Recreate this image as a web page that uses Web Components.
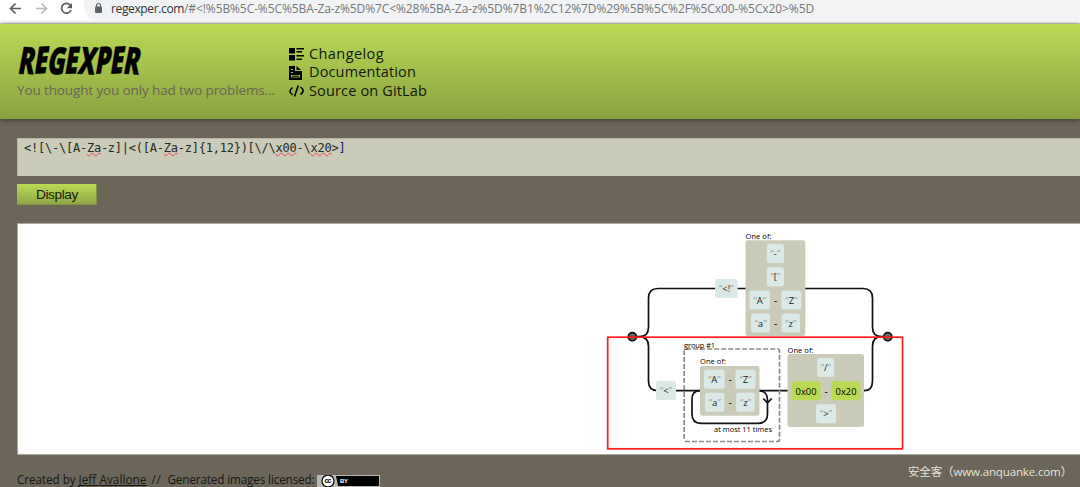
<!DOCTYPE html>
<html lang="en"><head><meta charset="utf-8"><title>Regexper</title>
<style>html,body{margin:0;height:100%;overflow:hidden;background:#6b6659}</style></head><body>
<regexper-page></regexper-page>
<script>
const define=(name,html,setup)=>customElements.define(name,class extends HTMLElement{
  connectedCallback(){ if(this.shadowRoot)return; const r=this.attachShadow({mode:'open'}); r.innerHTML=html; if(setup)setup(this,r); }
});
// Text whose tracking is adjusted to a given line width.
define('fit-text','<style>:host{display:inline-block;white-space:nowrap}:host([link]) span{text-decoration:underline;text-underline-offset:1px;text-decoration-thickness:1px;text-decoration-skip-ink:none}</style><span><slot></slot></span>',(el,r)=>{
  const w=+el.getAttribute('w'), n=el.textContent.length, s=r.querySelector('span');
  s.style.letterSpacing=((w-s.getBoundingClientRect().width)/n)+'px';
});
define('browser-bar',`<style>
:host{display:flex;background:#fff;border-bottom:1px solid #d5d9cf;box-sizing:border-box;height:24px;font:12px "Open Sans",sans-serif}
.nav{width:84px;flex:none}.box{flex:1;height:20px;background:#f1f3f4;border-radius:0 0 0 12px;display:flex;color:#75787b;line-height:17px}
.lock{width:27px;flex:none}b{font-weight:400;color:#303236}
</style><svg class="nav" width="84" height="20" fill="none" stroke="#5a5d61" stroke-width="1.7"><path d="M21 8.500H11M15.500 3.500l-5 5 5 5"/><path stroke="#b8babd" d="M36 8.500h10M41.500 3.500l5 5-5 5"/><path d="M70.500 5.500A4.900 4.900 0 1 0 71 10"/><path fill="#5a5d61" stroke="none" d="M72 3v5.200h-5.200z"/></svg>
<div class="box"><svg class="lock" width="27" height="18"><rect x="11" y="6.500" width="7" height="6.500" rx="1" fill="#5f6368"/><path d="M12.500 7V5.500a2 2 0 0 1 4 0V7" fill="none" stroke="#5f6368" stroke-width="1.200"/></svg><fit-text w="73"><b>regexper.com</b></fit-text><fit-text w="630">/#&lt;!%5B%5C-%5C%5BA-Za-z%5D%7C&lt;%28%5BA-Za-z%5D%7B1%2C12%7D%29%5B%5C%2F%5Cx00-%5Cx20&gt;%5D</fit-text></div>`);
define('brand-logo',`<style>:host{display:block;width:272px}svg{display:block;overflow:visible;margin:-10px 0 -10px -6px}div{font-size:13.500px;line-height:16px;padding-top:1px;color:#6b6659}</style>
<svg width="150" height="56" viewBox="-6 -10 150 56"><text transform="translate(0 28.800) skewX(-10)" x="0" y="0" font-family="Open Sans,sans-serif" font-weight="800" font-size="37.500" textLength="121.500" lengthAdjust="spacingAndGlyphs" rotate="1 -2 2 -1 2 -1 -2 2" stroke="#000" stroke-width=".5">REGEXPER</text></svg><div><fit-text w="258">You thought you only had two problems…</fit-text></div>`);
define('nav-link',`<style>:host{display:flex;height:18.300px;align-items:center;font-size:14.500px;line-height:18px;color:#11180a}svg{width:15px;height:15px;margin-right:5px;flex:none}</style><svg viewBox="0 0 15 15"></svg><slot></slot>`,(el,r)=>{
 r.querySelector('svg').innerHTML={
 list:'<path d="M0 1h6v5.500H0zM0 8h6v5.500H0zM7.500 1H15v1.500H7.500zM7.500 4H13v1.500H7.500zM7.500 8H15v1.500H7.500zM7.500 11.500H13V13H7.500z"/>',
 doc:'<path fill-rule="evenodd" d="M0 1h6v5h7v9H0zM2 4h2v1H2zM2 7h2v1H2zM2 10v2.500h9V10zM3 10.700h7v1H3zM7.500 1 12 5H7.500z"/>',
 code:'<path fill="none" stroke="#000" stroke-width="1.600" d="M3.500 4.500Q1 6.500 1 8.200T3.500 12M11.500 4q2.700 2.200 2.700 3.800t-2.700 3.700M9.300 2.500 5.500 13.500"/>'}[el.getAttribute('icon')];
});
define('page-header',`<style>:host{display:flex;box-sizing:border-box;height:95px;padding:21px 0 0 17px;background:linear-gradient(#bada55,#89a240);box-shadow:0 1px 5px #38362f;font-family:"Open Sans",sans-serif}</style>
<brand-logo></brand-logo><nav><nav-link icon="list"><fit-text w="75">Changelog</fit-text></nav-link><nav-link icon="doc"><fit-text w="107">Documentation</fit-text></nav-link><nav-link icon="code"><fit-text w="118">Source on GitLab</fit-text></nav-link></nav>`);
define('regex-form',`<style>:host{display:block;padding:19px 0 0 17px}.in{height:38px;box-sizing:border-box;padding:2px 7px;background:#cbcbba;box-shadow:inset 1px 1px #b7b7a6;font:12px/17px "DejaVu Sans Mono",monospace;color:#252a20}
u{text-decoration:underline wavy #ed4545 .7px;text-underline-offset:0;text-decoration-skip-ink:none}i{font-style:normal;color:#101b70}
button{display:block;margin:8px 0 0;width:80px;height:21px;padding:0 0 0 1px;border:0;border-right:1px solid #809448;border-bottom:1px solid #809448;background:linear-gradient(#bada55,#8fa747);font:13.700px/19px "Liberation Sans",sans-serif;color:#172007}</style>
<div class="in"><fit-text w="321.500">&lt;![\\-\\[A-<u>Za</u>-z]|&lt;([A-<u>Za</u>-z]{1,12})[\\/\\<u>x00</u>-\\<u>x20</u>&gt;<i>]</i></fit-text></div><button><fit-text w="42">Display</fit-text></button>`);
define('rail-diagram','<style>:host{display:block;height:230px}svg{display:block;font-family:"Open Sans",sans-serif}</style><svg width="320" height="230" viewBox="600 224 320 230"></svg>',(el,r)=>{
 const esc=t=>t.replace('<','&lt;').replace('>','&gt;');
 const fit=(x,y,w,t)=>`<text x="${x}" y="${y}" font-size="7.500" textLength="${w}">${t}</text>`;
 const group=(x,y,w,h)=>`<rect x="${x}" y="${y}" width="${w}" height="${h}" rx="2.500" fill="#cbcbba"/>`;
 const lit=(x,y,w,t)=>`<rect x="${x}" y="${y}" width="${w}" height="19" rx="2.500" fill="#dae9e5"/><text x="${x+w/2}" y="${y+13}" text-anchor="middle" font-size="9.500" fill="#222"><tspan fill="#999">“</tspan>${esc(t)}<tspan fill="#999">”</tspan></text>`;
 const hex=(x,y,t)=>`<rect x="${x}" y="${y}" width="29" height="19" rx="2.500" fill="#bada55"/><text x="${x+4}" y="${y+13.5}" font-size="9.300" textLength="21">${t}</text>`;
 const dash=(x,y)=>`<text x="${x}" y="${y}" text-anchor="middle" font-size="10">-</text>`;
 r.querySelector('svg').innerHTML=`
<g fill="none" stroke="#111" stroke-width="1.700">
<path d="M632 336.700h7q9.500 0 9.500-9.500V298q0-9.500 9.500-9.500H863q9.500 0 9.500 9.500v29.200q0 9.500 9.500 9.500h6M639 336.700q9.500 0 9.500 9.500V381q0 9.700 9.500 9.700H864q8.500 0 8.500-9.700v-34.800q0-9.500 9.500-9.500"/>
<path d="M700 390.700q-8 0-8 8.500V414q0 9.300 9 9.300h57q9.500 0 9.500-9.300v-14q0-9.300-9-9.300M763.300 398.500l4.200 4.500 4.200-4.500"/>
<rect x="684.200" y="349" width="95.300" height="92.500" rx="2" stroke="#908c83" stroke-dasharray="5 2"/></g>
<g fill="#6b6659" stroke="#111" stroke-width="1.600"><circle cx="632.300" cy="336.700" r="4.100"/><circle cx="887.800" cy="336.700" r="4.100"/></g>
${group(745.5,240.3,59.8,95.7)}${group(700,366,59.5,49.7)}${group(787.5,354,76.5,73)}
${fit(745.5,239,26,'One of:')}${fit(684,347.5,31,'group #1')}${fit(700,364,26,'One of:')}${fit(787.5,353,26,'One of:')}${fit(714,432,58,'at most 11 times')}
${lit(715,279,22.7,'<!')}${lit(766.8,244,17.2,'-')}${lit(766.8,267.3,17.2,'[')}
${lit(749.5,290.5,20.5,'A')}${lit(781.2,290.5,20.3,'Z')}${lit(751,313.5,19,'a')}${lit(781.5,313.5,18.5,'z')}${dash(775.7,303.5)}${dash(775.7,327)}
${lit(656,381,20,'<')}${lit(704,369.700,20.700,'A')}${lit(735.500,369.700,20,'Z')}${lit(705,392.700,19.500,'a')}${lit(736.200,392.700,18.500,'z')}${dash(730.200,383)}${dash(730.200,406)}
${lit(817.200,358,17,'/')}${hex(791.500,381.300,'0x00')}${hex(831.500,381.300,'0x20')}${dash(826,395)}${lit(816,404.200,20,'>')}
<rect x="607.700" y="337.200" width="294.800" height="111.600" fill="none" stroke="#ff1a1a" stroke-width="1.700"/>`;
});
define('result-panel',`<style>:host{display:block;box-sizing:border-box;height:232px;margin:18px 0 0 17px;background:#fff;border:1px solid #aaa79f;border-right:0;padding-left:582px}</style><rail-diagram></rail-diagram>`);
define('page-footer',`<style>:host{display:flex;height:32px;padding:0 8px 0 17px;font:11.700px/16px "Open Sans",sans-serif;color:#171713}.l{display:flex;padding-top:16px;flex:1}.g{width:5px}.cc{margin:4px 0 0 2px}.w{padding-top:9px;color:#e5e3dd;font-family:"Open Sans","Noto Sans CJK SC",sans-serif;font-size:11.500px}</style>
<div class="l"><fit-text w="61.500">Created by&nbsp;</fit-text><fit-text link w="68">Jeff Avallone</fit-text><span class="g"></span><fit-text w="10">//</fit-text><span style="width:6px"></span><fit-text w="147">Generated images licensed:</fit-text>
<svg class="cc" width="63" height="12" viewBox="0 0 63 12"><rect width="63" height="12" fill="#000"/><rect x=".5" y=".5" width="62" height="11" fill="none" stroke="#b6b8b1"/><path d="M1 1h18l2 10H1z" fill="#b6b8b1"/><circle cx="11" cy="6" r="6" fill="#fff" stroke="#111" stroke-width="1.300"/><text x="11" y="8.300" text-anchor="middle" font-family="Liberation Sans" font-weight="700" font-size="7" textLength="7">cc</text><text x="23" y="8" fill="#fff" font-family="Liberation Sans" font-weight="700" font-size="6" textLength="8">BY</text></svg></div>
<div class="w"><fit-text w="164">安全客（www.anquanke.com）</fit-text></div>`);
define('regexper-page',`<style>:host{display:block;width:100%;height:487px;overflow:hidden;background:#6b6659}</style><browser-bar></browser-bar><page-header></page-header><regex-form></regex-form><result-panel></result-panel><page-footer></page-footer>`);
</script></body></html>
